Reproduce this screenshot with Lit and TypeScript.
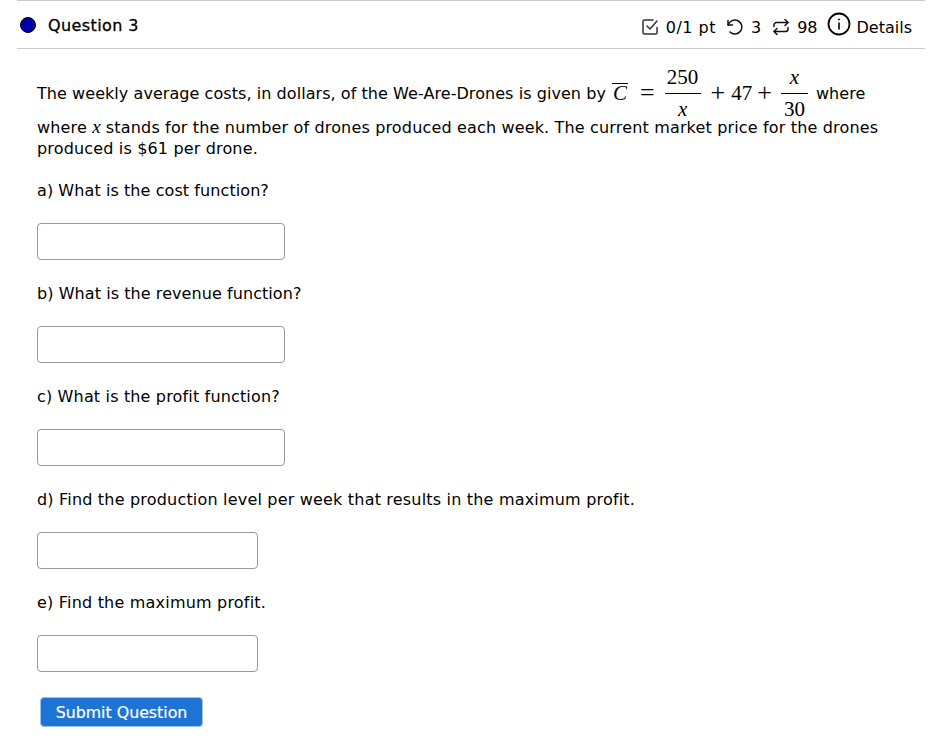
import { LitElement, html, css } from "lit";
import { customElement } from "lit/decorators.js";

const questions = [
  { label: "a) What is the cost function?", width: 248, track: 0.08 },
  { label: "b) What is the revenue function?", width: 248, track: 0.07 },
  { label: "c) What is the profit function?", width: 248, track: 0.16 },
  { label: "d) Find the production level per week that results in the maximum profit.", width: 221, track: 0.19 },
  { label: "e) Find the maximum profit.", width: 221, track: 0.2 },
];

@customElement("app-root")
export class AppRoot extends LitElement {
  static styles = css`
    :host {
      display: block;
      font-family: "DejaVu Sans", sans-serif;
      font-size: 16px;
      color: #000;
      background: #fff;
      height: 751px;
      box-sizing: border-box;
      padding: 0 17px;
    }
    .head {
      width: 908px;
      height: 47px;
      border-top: 1px solid #ccc;
      border-bottom: 1px solid #ccc;
      display: flex;
      align-items: center;
      justify-content: space-between;
    }
    .left { display: flex; align-items: center; gap: 12px; padding-left: 3px; }
    .dot {
      width: 14px;
      height: 14px;
      border-radius: 50%;
      background: #0000a8;
      border: 1px solid #000;
    }
    .title { letter-spacing: 0.4px; -webkit-text-stroke: 0.3px #000; padding-top: 2px; }
    .right { display: flex; align-items: center; padding-right: 13px; padding-top: 5px; }
    .right svg { display: block; }
    .pts { margin-left: 7px; letter-spacing: 0.5px; }
    .hist { margin-left: 10px; }
    .tries { margin-left: 7px; }
    .sync { margin-left: 11px; }
    .subs { margin-left: 7px; }
    .info { margin: -6px 0 0 9px; }
    .details { margin-left: 6px; }
    .body { padding-left: 20px; }
    .eq-line { display: flex; align-items: center; height: 48px; padding-top: 20px; letter-spacing: 0.06px; }
    .math { font-family: "Liberation Serif", serif; font-size: 21px; letter-spacing: 0; }
    .op { font-family: "Liberation Serif", serif; font-size: 26px; font-weight: 400; line-height: 24px; letter-spacing: 0; }
    .over {
      box-sizing: border-box;
      width: 16px;
      border-top: 1px solid #000;
      line-height: 19px;
      margin-left: 6px;
      font-style: italic;
      text-align: center;
    }
    .eq { margin-left: 12px; }
    .plus1 { margin-left: 10px; }
    .n47 { margin-left: 6px; }
    .plus2 { margin-left: 5px; }
    .frac {
      display: inline-flex;
      flex-direction: column;
      align-items: center;
      font-family: "Liberation Serif", serif;
      font-size: 21px;
      line-height: 24px;
      letter-spacing: 0;
      margin-left: 10px;
    }
    .frac .n { width: 100%; border-bottom: 1px solid #000; padding-bottom: 4px; text-align: center; }
    .frac .d { padding-top: 3px; height: 24px; }
    .f1 { width: 36px; }
    .f2 { width: 27px; margin-left: 9px; }
    .where { margin-left: 8px; }
    .para { line-height: 21px; margin: 0; letter-spacing: 0.16px; }
    .para-line { display: block; }
    .mvar { display: inline-block; line-height: 16px; font-family: "Liberation Serif", serif; font-style: italic; font-size: 19px; letter-spacing: 0; }
    .q { margin: 0; line-height: 21px; }
    .q-first { margin-top: 21px; }
    .field {
      box-sizing: border-box;
      height: 37px;
      border: 1px solid #999;
      border-radius: 4px;
      background: #fff;
      margin: 22px 0 23px;
    }
    button {
      display: block;
      margin: 25px 0 0 3px;
      width: 163px;
      height: 30px;
      padding: 0;
      background: #1d74d5;
      color: #fff;
      border: 1px solid #9fc3ea;
      border-radius: 4px;
      font: 15.8px "DejaVu Sans", sans-serif;
      -webkit-text-stroke: 0.2px #fff;
    }
  `;

  render() {
    return html`
      <div class="head">
        <div class="left"><span class="dot"></span><span class="title">Question 3</span></div>
        <div class="right">
          <svg width="18" height="18" viewBox="0 0 18 18" fill="none" stroke="#333" stroke-width="1.5" stroke-linecap="round" stroke-linejoin="round"><path d="M16 9.500V14.500a1.500 1.500 0 0 1-1.500 1.500H3.500A1.500 1.500 0 0 1 2 14.500V3.500A1.500 1.500 0 0 1 3.500 2H12"/><path d="M6 8l3 3 7-8"/></svg>
          <span class="pts">0/1 pt</span>
          <svg class="hist" width="18" height="18" viewBox="0 0 18 18" fill="none" stroke="#111" stroke-width="1.500" stroke-linecap="round" stroke-linejoin="round"><path d="M2 2.500v4.500h4.500"/><path d="M2.200 7A7 7 0 1 1 4 14"/></svg>
          <span class="tries">3</span>
          <svg class="sync" width="18" height="18" viewBox="0 0 18 18" fill="none" stroke="#111" stroke-width="1.500" stroke-linecap="round" stroke-linejoin="round"><path d="M13 1.500l3 3-3 3"/><path d="M2 8.500V7a2.500 2.500 0 0 1 2.500-2.500H16"/><path d="M5 16.500l-3-3 3-3"/><path d="M16 9.500V11a2.500 2.500 0 0 1-2.500 2.500H2"/></svg>
          <span class="subs">98</span>
          <svg class="info" width="24" height="24" viewBox="0 0 24 24" fill="none" stroke="#000" stroke-width="1.800" stroke-linecap="round"><circle cx="12" cy="12" r="10.500"/><path d="M12 11v6" stroke-width="1.600"/><circle cx="12" cy="7.500" r="0.600" fill="#000" stroke-width="1"/></svg>
          <span class="details">Details</span>
        </div>
      </div>
      <div class="body">
        <div class="eq-line">
          <span>The weekly average costs, in dollars, of the We-Are-Drones is given by</span>
          <span class="math over">C</span>
          <span class="op eq">=</span>
          <span class="frac f1"><span class="n">250</span><span class="d"><i>x</i></span></span>
          <span class="op plus1">+</span>
          <span class="math n47">47</span>
          <span class="op plus2">+</span>
          <span class="frac f2"><span class="n"><i>x</i></span><span class="d">30</span></span>
          <span class="where">where</span>
        </div>
        <p class="para">
          <span class="para-line">where <span class="mvar">x</span> stands for the number of drones produced each week. The current market price for the drones</span>
          <span class="para-line">produced is $61 per drone.</span>
        </p>
        ${questions.map(
          (q, i) => html`
            <p class="q ${i === 0 ? "q-first" : ""}" style="letter-spacing:${q.track}px">${q.label}</p>
            <div class="field" style="width:${q.width}px"></div>
          `
        )}
        <button>Submit Question</button>
      </div>
    `;
  }
}
